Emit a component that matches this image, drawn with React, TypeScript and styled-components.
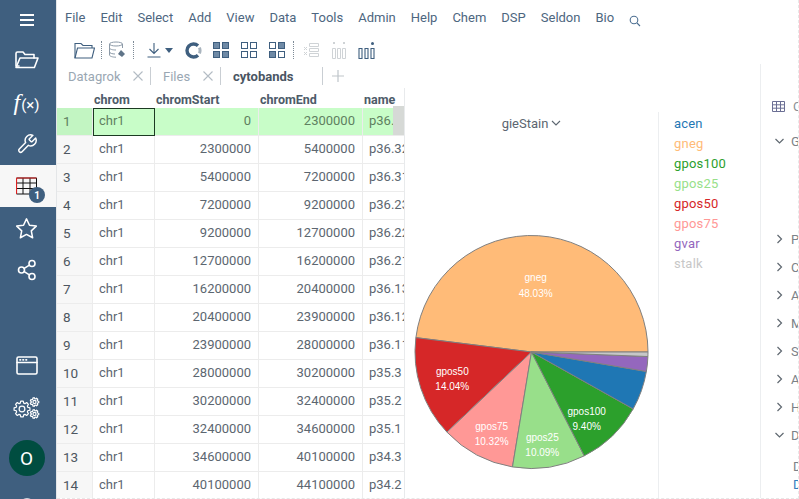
import React from "react";
import styled, { createGlobalStyle } from "styled-components";

const GlobalStyle = createGlobalStyle`
  html, body {
    margin: 0;
    padding: 0;
    height: 100%;
    overflow: hidden;
    background: #fff;
  }
  body {
    font-family: "Roboto", "Liberation Sans", sans-serif;
  }
`;

const navy = "#3f5f7f";

const Page = styled.div`
  display: flex;
  width: 799px;
  height: 499px;
  overflow: hidden;
`;

/* ---------- sidebar ---------- */

const Sidebar = styled.nav`
  flex: 0 0 56px;
  height: 499px;
  background: ${navy};
  display: flex;
  flex-direction: column;
  overflow: hidden;
  border-right: 1px solid #e4e6e8;
`;

const SideItem = styled.div<{ $active?: boolean; $h?: number }>`
  position: relative;
  flex: 0 0 ${(p) => p.$h ?? 42}px;
  box-sizing: border-box;
  padding-right: 3px;
  display: flex;
  align-items: center;
  justify-content: center;
  color: #fff;
  background: ${(p) => (p.$active ? "#f7f7f7" : "transparent")};
`;

const SideGap = styled.div`
  flex: 0 0 54px;
`;

const Badge = styled.span`
  position: absolute;
  left: 29px;
  top: 22px;
  width: 16px;
  height: 16px;
  border-radius: 50%;
  background: ${navy};
  color: #fff;
  font-size: 10px;
  font-weight: 700;
  display: flex;
  align-items: center;
  justify-content: center;
`;

const Avatar = styled.div`
  width: 36px;
  height: 36px;
  border-radius: 50%;
  background: #004d40;
  color: #fff;
  font-size: 19px;
  display: flex;
  align-items: center;
  justify-content: center;
`;

const stroke = {
  fill: "none",
  stroke: "currentColor",
  strokeWidth: 1.6,
  strokeLinecap: "round" as const,
  strokeLinejoin: "round" as const,
};

const gearOutline = (cx: number, cy: number, r: number, teeth: number) => {
  const pts: string[] = [];
  const inner = r * 0.76;
  const step = (Math.PI * 2) / teeth;
  for (let i = 0; i < teeth; i++) {
    const a = i * step;
    [
      [a - step * 0.36, inner],
      [a - step * 0.2, r],
      [a + step * 0.2, r],
      [a + step * 0.36, inner],
    ].forEach(([t, d]) => {
      pts.push(`${(cx + Math.cos(t) * d).toFixed(2)},${(cy + Math.sin(t) * d).toFixed(2)}`);
    });
  }
  return pts.join(" ");
};

const Gear = ({ cx, cy, r, teeth }: { cx: number; cy: number; r: number; teeth: number }) => (
  <g>
    <polygon points={gearOutline(cx, cy, r, teeth)} />
    <circle cx={cx} cy={cy} r={r * 0.36} />
  </g>
);

const FxLabel = styled.span`
  font-family: "Liberation Serif", serif;
  font-size: 24px;
  font-style: italic;
  color: #fff;
  span {
    font-family: "Roboto", sans-serif;
    font-style: normal;
    font-size: 15px;
    margin-left: 1px;
  }
`;

/* ---------- top bars ---------- */

const Main = styled.div`
  flex: 1;
  min-width: 0;
  box-sizing: border-box;
  display: flex;
  flex-direction: column;
  border-right: 1px dashed #e8e8e8;
  border-bottom: 1px dashed #e8e8e8;
`;

const MenuBar = styled.div`
  height: 36px;
  box-sizing: border-box;
  padding: 0 0 2px 8px;
  display: flex;
  align-items: center;
  gap: 15px;
  font-size: 13px;
  color: #4d6680;
`;

const SearchIcon = styled.svg`
  margin-top: 8px;
  flex: none;
`;

const Toolbar = styled.div`
  height: 28px;
  display: flex;
  align-items: center;
  padding-left: 17px;
`;

const Tool = styled.span<{ $w: number; $ml?: number }>`
  flex: 0 0 ${(p) => p.$w}px;
  margin-left: ${(p) => p.$ml ?? 0}px;
  display: flex;
  align-items: center;
  justify-content: center;
  color: ${navy};
`;

const ToolSep = styled.span<{ $ml: number }>`
  flex: 0 0 0;
  height: 18px;
  margin-left: ${(p) => p.$ml}px;
  border-left: 1px dotted #7d8a96;
`;

const Workspace = styled.div`
  flex: 1;
  min-height: 0;
  display: flex;
`;

const DocArea = styled.div`
  flex: 0 0 703px;
  display: flex;
  flex-direction: column;
  min-width: 0;
`;

const TabStrip = styled.div`
  height: 24px;
  display: flex;
  align-items: center;
  font-size: 13px;
  padding-left: 11px;
`;

const Tab = styled.span<{ $w: number; $current?: boolean }>`
  flex: 0 0 ${(p) => p.$w}px;
  display: flex;
  align-items: center;
  justify-content: space-between;
  padding-right: 7px;
  margin-right: 12px;
  height: 18px;
  box-sizing: border-box;
  color: ${(p) => (p.$current ? "#4a5563" : "#9aa7b3")};
  font-weight: ${(p) => (p.$current ? 700 : 400)};
  border-right: 1px solid #c9ced3;
`;

const AddTab = styled.svg`
  margin-left: -3px;
  flex: none;
`;

const Views = styled.div`
  flex: 1;
  min-height: 0;
  display: flex;
`;

/* ---------- grid ---------- */

const Table = styled.div`
  position: relative;
  flex: 0 0 347px;
  overflow: hidden;
  border-right: 1px solid #e8eaec;
  font-size: 13px;
  padding-top: 4px;
`;

const Row = styled.div`
  display: grid;
  grid-template-columns: 36px 62px 104px 104px 41px;
`;

const HeadCell = styled.div`
  height: 16px;
  line-height: 16px;
  padding-left: 1px;
  font-size: 12.5px;
  font-weight: 700;
  color: #4d5b69;
  white-space: nowrap;
  overflow: hidden;
`;

const Num = styled.div<{ $sel?: boolean }>`
  height: 28px;
  box-sizing: border-box;
  line-height: 26px;
  padding-left: 6px;
  font-size: 13.5px;
  color: ${(p) => (p.$sel ? "#5f8060" : "#4d5660")};
  background: ${(p) => (p.$sel ? "#c2f5c2" : "#f7f7f7")};
  border-bottom: 1px solid #ececec;
  border-right: 1px solid #ececec;
`;

const Cell = styled.div<{ $sel?: boolean; $right?: boolean; $current?: boolean; $last?: boolean }>`
  height: 28px;
  box-sizing: border-box;
  line-height: 26px;
  padding: 0 ${(p) => (p.$last ? 0 : 7)}px 0 6px;
  white-space: nowrap;
  overflow: hidden;
  text-align: ${(p) => (p.$right ? "right" : "left")};
  color: ${(p) => (p.$sel ? "#5f8060" : "#5c6670")};
  background: ${(p) => (p.$sel ? "#c8fdc8" : "#fff")};
  border-bottom: 1px solid #ececec;
  border-right: ${(p) => (p.$last ? "none" : "1px solid #ececec")};
  ${(p) => (p.$current ? "outline: 1px solid #1c3a22; outline-offset: -1px;" : "")}
`;

const ScrollThumb = styled.div`
  position: absolute;
  right: 0;
  top: 18px;
  width: 11px;
  height: 29px;
  background: #d6d9d6;
`;

/* ---------- pie viewer ---------- */

const PieViewer = styled.div`
  flex: 0 0 253px;
  display: flex;
  flex-direction: column;
  align-items: center;
`;

const ColumnPicker = styled.div`
  height: 16px;
  margin-top: 27px;
  display: flex;
  align-items: center;
  gap: 3px;
  font-size: 13px;
  color: #5c6670;
`;

const PieSvg = styled.svg`
  display: block;
  margin-top: 104px;
  flex: none;
`;

const Legend = styled.div`
  flex: 1;
  margin-top: 24px;
  padding: 2px 0 0 15px;
  border-left: 1px solid #eceef0;
  display: flex;
  flex-direction: column;
`;

const LegendItem = styled.div<{ $color: string }>`
  height: 20px;
  line-height: 20px;
  font-size: 13px;
  letter-spacing: 0.2px;
  color: ${(p) => p.$color};
`;

/* ---------- context panel ---------- */

const ContextPanel = styled.aside`
  flex: 1;
  min-width: 0;
  overflow: hidden;
  border-left: 1px solid #eceef0;
  padding: 34px 0 0 11px;
  font-size: 13px;
  color: #7b8288;
  white-space: nowrap;
  display: flex;
  flex-direction: column;
  svg {
    flex: none;
  }
`;

const PanelTitle = styled.div`
  display: flex;
  align-items: center;
  gap: 8px;
  height: 16px;
  color: #8a9096;
`;

const Pane = styled.div<{ $mt?: number }>`
  display: flex;
  align-items: center;
  gap: 7px;
  height: 16px;
  margin-top: ${(p) => p.$mt ?? 12}px;
  padding-left: 3px;
  color: #7b8288;
`;

const PaneText = styled.div`
  padding-left: 21px;
  height: 16px;
  line-height: 16px;
  margin-top: 16px;
`;

const PaneLink = styled(PaneText)`
  margin-top: 2px;
  color: #2f7fbf;
`;

/* ---------- data ---------- */

const menu = ["File", "Edit", "Select", "Add", "View", "Data", "Tools", "Admin", "Help", "Chem", "DSP", "Seldon", "Bio"];

const rows: [string, string, string][] = [
  ["0", "2300000", "p36.33"],
  ["2300000", "5400000", "p36.32"],
  ["5400000", "7200000", "p36.31"],
  ["7200000", "9200000", "p36.23"],
  ["9200000", "12700000", "p36.22"],
  ["12700000", "16200000", "p36.21"],
  ["16200000", "20400000", "p36.13"],
  ["20400000", "23900000", "p36.12"],
  ["23900000", "28000000", "p36.11"],
  ["28000000", "30200000", "p35.3"],
  ["30200000", "32400000", "p35.2"],
  ["32400000", "34600000", "p35.1"],
  ["34600000", "40100000", "p34.3"],
  ["40100000", "44100000", "p34.2"],
];

const legend = [
  { name: "acen", color: "#1f77b4" },
  { name: "gneg", color: "#ffbb78" },
  { name: "gpos100", color: "#2ca02c" },
  { name: "gpos25", color: "#98df8a" },
  { name: "gpos50", color: "#d62728" },
  { name: "gpos75", color: "#ff9896" },
  { name: "gvar", color: "#9467bd" },
  { name: "stalk", color: "#c7c7c7" },
];

// shares in drawing order, counter-clockwise from the east
const slices = [
  { color: "#ffbb78", share: 48.03, label: "gneg", x: 130.7, y: 46 },
  { color: "#d62728", share: 14.04, label: "gpos50", x: 47.3, y: 139.7 },
  { color: "#ff9896", share: 10.32, label: "gpos75", x: 86.7, y: 194.7 },
  { color: "#98df8a", share: 10.09, label: "gpos25", x: 137.3, y: 205.7 },
  { color: "#2ca02c", share: 9.4, label: "gpos100", x: 181.7, y: 179.7 },
  { color: "#1f77b4", share: 5.45 },
  { color: "#9467bd", share: 2.05 },
  { color: "#c7c7c7", share: 0.62 },
];

const R = 116.5;
const CX = 126.5;
const CY = 117;

const point = (pct: number) => {
  const t = (pct / 100) * Math.PI * 2;
  return [CX + R * Math.cos(t), CY - R * Math.sin(t)];
};

const Pie = () => {
  let acc = 0;
  return (
    <PieSvg width="253" height="236" viewBox="0 0 253 236">
      {slices.map((s) => {
        const [x1, y1] = point(acc);
        const [x2, y2] = point(acc + s.share);
        acc += s.share;
        return (
          <path
            key={s.color}
            d={`M${CX} ${CY}L${x1} ${y1}A${R} ${R} 0 0 0 ${x2} ${y2}Z`}
            fill={s.color}
            stroke="#808080"
            strokeWidth="1"
          />
        );
      })}
      {slices.map((s) =>
        s.label ? (
          <text
            key={s.label}
            x={s.x}
            y={s.y}
            textAnchor="middle"
            fill="#fff"
            fontFamily="Liberation Sans, sans-serif"
            fontSize="10"
          >
            <tspan x={s.x}>{s.label}</tspan>
            <tspan x={s.x} dy="15.7">
              {s.share.toFixed(2)}%
            </tspan>
          </text>
        ) : null
      )}
    </PieSvg>
  );
};

const Chevron = ({ open }: { open?: boolean }) => (
  <svg width="9" height="10" viewBox="0 0 9 10" fill="none" stroke="#5f6870" strokeWidth="1.2">
    {open ? <path d="M.5 3l4 4 4-4" /> : <path d="M2.500 1l4 4-4 4" />}
  </svg>
);

const Close = () => (
  <svg width="10" height="10" viewBox="0 0 10 10" stroke="#b3bcc4" strokeWidth="1.1">
    <path d="M.5.5l9 9M9.5.5l-9 9" />
  </svg>
);

const GridIcon = ({ fills }: { fills: boolean[] }) => (
  <svg width="16" height="16" viewBox="0 0 16 16">
    {[
      [0.5, 0.5],
      [9.5, 0.5],
      [0.5, 9.5],
      [9.5, 9.5],
    ].map(([x, y], i) => (
      <rect
        key={i}
        x={x}
        y={y}
        width="6"
        height="6"
        fill={fills[i] ? "#6f8aa6" : "none"}
        stroke={navy}
      />
    ))}
  </svg>
);

export default function App() {
  return (
    <>
      <GlobalStyle />
      <Page>
        <Sidebar>
          <SideItem $h={39}>
            <svg width="16" height="14" viewBox="0 0 16 14" stroke="#fff" strokeWidth="2">
              <path d="M1 2h14M1 7h14M1 12h14" />
            </svg>
          </SideItem>
          <SideItem>
            <svg width="24" height="18" viewBox="0 0 24 18" {...stroke}>
              <path d="M4 15L1 15V2.5C1 1.7 1.6 1 2.5 1H8l2 2.5h9V7" />
              <path d="M1 16.5L5 7h18l-3.6 9.5z" />
            </svg>
          </SideItem>
          <SideItem>
            <FxLabel>
              f<span>(×)</span>
            </FxLabel>
          </SideItem>
          <SideItem>
            <svg width="22" height="22" viewBox="0 0 24 24" {...stroke}>
              <path d="M14.7 6.3a1 1 0 0 0 0 1.4l1.6 1.6a1 1 0 0 0 1.4 0l3.77-3.77a6 6 0 0 1-7.94 7.94l-6.91 6.91a2.12 2.12 0 0 1-3-3l6.91-6.91a6 6 0 0 1 7.94-7.94l-3.76 3.76z" />
            </svg>
          </SideItem>
          <SideItem $active>
            <svg width="21" height="18" viewBox="0 0 21 18" fill="none" stroke="#111" strokeWidth="1">
              <path d="M.5 1h20v16H.5z" />
              <path d="M.5 6h20M.5 11.500h20M7 1v16M14 1v16" />
              <path d="M.5 1v16M.5 1h20" stroke="#d22" strokeWidth="1.2" />
            </svg>
            <Badge>1</Badge>
          </SideItem>
          <SideItem>
            <svg width="23" height="23" viewBox="0 0 24 24" {...stroke}>
              <path d="M12 2l3.1 6.6 7.1.9-5.200 5 1.400 7.200L12 18.200l-6.400 3.500L7 14.500l-5.200-5 7.100-.9z" />
            </svg>
          </SideItem>
          <SideItem>
            <svg width="20" height="22" viewBox="0 0 20 22" {...stroke}>
              <circle cx="15" cy="4.500" r="3" />
              <circle cx="4.500" cy="11" r="3" />
              <circle cx="15" cy="17.500" r="3" />
              <path d="M7.200 9.400l5.200-3.300M7.200 12.600l5.200 3.300" />
            </svg>
          </SideItem>
          <SideGap />
          <SideItem>
            <svg width="22" height="20" viewBox="0 0 22 20" {...stroke}>
              <rect x="1" y="1" width="20" height="17" rx="1.500" />
              <path d="M1 6.500h20" />
              <path d="M4 3.800h.5M7 3.800h.5M10 3.800h.5" strokeWidth="1.800" />
            </svg>
          </SideItem>
          <SideItem>
            <svg width="27" height="22" viewBox="0 0 27 22" {...stroke} strokeWidth={1.2}>
              <Gear cx={9} cy={12} r={8} teeth={8} />
              <Gear cx={21.500} cy={5} r={4.300} teeth={7} />
              <Gear cx={21.500} cy={17} r={4.300} teeth={7} />
            </svg>
          </SideItem>
          <SideItem $h={8} />
          <SideItem>
            <Avatar>O</Avatar>
          </SideItem>
          <SideItem $h={56}>
            <svg width="20" height="20" viewBox="0 0 20 20" {...stroke}>
              <circle cx="10" cy="10" r="8" />
            </svg>
          </SideItem>
        </Sidebar>

        <Main>
          <MenuBar>
            {menu.map((m) => (
              <span key={m}>{m}</span>
            ))}
            <SearchIcon width="12" height="12" viewBox="0 0 12 12" fill="none" stroke="#4d6f92" strokeWidth="1.100">
              <circle cx="5" cy="5" r="3.800" />
              <path d="M8 8l3 3" />
            </SearchIcon>
          </MenuBar>

          <Toolbar>
            <Tool $w={21}>
              <svg width="21" height="17" viewBox="0 0 21 17" fill="none" stroke={navy} strokeWidth="1.100">
                <path d="M1 16V1.500h6l2 2h9V6" />
                <path d="M1 16L3.500 6H20.500l-2.500 10z" />
              </svg>
            </Tool>
            <ToolSep $ml={6} />
            <Tool $w={18} $ml={6}>
              <svg width="18" height="18" viewBox="0 0 18 18" fill="none" stroke="#8c9aa8" strokeWidth="1">
                <ellipse cx="8" cy="3" rx="6.500" ry="2" />
                <path d="M1.500 3v11c0 1.200 3 2.200 6.500 2.200M14.500 3v4M1.500 7c0 1.200 3 2 6.500 2M1.500 11c0 1.200 3 2 5.500 2" />
                <path d="M10 13l3-4 4 4-3 3z" fill="#5f7488" stroke="none" />
              </svg>
            </Tool>
            <ToolSep $ml={7} />
            <Tool $w={14} $ml={13}>
              <svg width="14" height="16" viewBox="0 0 14 16" fill="none" stroke={navy} strokeWidth="1.100">
                <path d="M7 1v10M2.500 7L7 11.500 11.500 7M.5 15h13" />
              </svg>
            </Tool>
            <Tool $w={8} $ml={4}>
              <svg width="8" height="5" viewBox="0 0 8 5">
                <path d="M0 0h8L4 5z" fill={navy} />
              </svg>
            </Tool>
            <Tool $w={18} $ml={11}>
              <svg width="17" height="17" viewBox="0 0 17 17" fill="none">
                <path d="M14.400 5.700A6.500 6.500 0 0 1 14.400 11.300" stroke="#a9b4be" strokeWidth="3" />
                <path d="M13 3.800A6.500 6.500 0 1 0 13 13.200" stroke="#3f5f7f" strokeWidth="3.400" />
              </svg>
            </Tool>
            <Tool $w={16} $ml={11}>
              <GridIcon fills={[true, true, true, true]} />
            </Tool>
            <Tool $w={16} $ml={12}>
              <GridIcon fills={[false, false, false, false]} />
            </Tool>
            <Tool $w={16} $ml={12}>
              <GridIcon fills={[false, true, true, false]} />
            </Tool>
            <ToolSep $ml={8} />
            <Tool $w={16} $ml={9}>
              <svg width="16" height="16" viewBox="0 0 16 16" fill="none" stroke="#cfd3d6">
                <path d="M6.500 1.500h9v3h-9zM6.500 6.500h9v3h-9zM6.500 11.500h9v3h-9z" />
                <path d="M1 5l3 3M4 5L1 8M1 10l3 3M4 10l-3 3" />
              </svg>
            </Tool>
            <Tool $w={16} $ml={12}>
              <svg width="16" height="18" viewBox="0 0 16 18" fill="none" stroke="#cfd3d6">
                <path d="M1.500 7.500h3v10h-3zM6.500 7.500h3v10h-3zM11.500 7.500h3v10h-3z" />
                <path d="M2 1l2 2M4 1L2 3M12 1l2 2M14 1l-2 2" />
              </svg>
            </Tool>
            <Tool $w={17} $ml={11}>
              <svg width="17" height="18" viewBox="0 0 17 18" fill="none" stroke={navy} strokeWidth="1.100">
                <path d="M1 7.500h3v10H1zM7 7.500h3v10H7zM13 7.500h3v10h-3z" />
                <circle cx="14.500" cy="2.500" r="1.500" fill="#3f5f7f" stroke="none" />
              </svg>
            </Tool>
          </Toolbar>

          <Workspace>
            <DocArea>
              <TabStrip>
                <Tab $w={83}>
                  Datagrok
                  <Close />
                </Tab>
                <Tab $w={58}>
                  Files
                  <Close />
                </Tab>
                <Tab $w={90} $current>
                  cytobands
                </Tab>
                <AddTab width="12" height="12" viewBox="0 0 12 12" stroke="#bfc5ca" strokeWidth="1.200">
                  <path d="M6 0v12M0 6h12" />
                </AddTab>
              </TabStrip>
              <Views>
                <Table>
                  <Row>
                    <HeadCell />
                    <HeadCell>chrom</HeadCell>
                    <HeadCell>chromStart</HeadCell>
                    <HeadCell>chromEnd</HeadCell>
                    <HeadCell>name</HeadCell>
                  </Row>
                  {rows.map(([start, end, name], i) => {
                    const sel = i === 0;
                    return (
                      <Row key={name}>
                        <Num $sel={sel}>{i + 1}</Num>
                        <Cell $sel={sel} $current={sel}>
                          chr1
                        </Cell>
                        <Cell $sel={sel} $right>
                          {start}
                        </Cell>
                        <Cell $sel={sel} $right>
                          {end}
                        </Cell>
                        <Cell $sel={sel} $last>
                          {name}
                        </Cell>
                      </Row>
                    );
                  })}
                  <ScrollThumb />
                </Table>
                <PieViewer>
                  <ColumnPicker>
                    gieStain
                    <svg width="10" height="8" viewBox="0 0 10 8" fill="none" stroke="#5c6670" strokeWidth="1.100">
                      <path d="M1 2l4 4 4-4" />
                    </svg>
                  </ColumnPicker>
                  <Pie />
                </PieViewer>
                <Legend>
                  {legend.map((l) => (
                    <LegendItem key={l.name} $color={l.color}>
                      {l.name}
                    </LegendItem>
                  ))}
                </Legend>
              </Views>
            </DocArea>
            <ContextPanel>
              <PanelTitle>
                <svg width="13" height="11" viewBox="0 0 13 11" fill="none" stroke="#6b6f94" strokeWidth="1">
                  <path d="M.5.500h12v10H.5zM.5 3.800h12M.5 7.200h12M4.500.500v10M8.500.500v10" />
                </svg>
                Cytobands
              </PanelTitle>
              <Pane $mt={19}>
                <Chevron open />
                General
              </Pane>
              <Pane $mt={82}>
                <Chevron />
                Properties
              </Pane>
              <Pane>
                <Chevron />
                Colors
              </Pane>
              <Pane>
                <Chevron />
                Actions
              </Pane>
              <Pane>
                <Chevron />
                Model
              </Pane>
              <Pane>
                <Chevron />
                Sharing
              </Pane>
              <Pane>
                <Chevron />
                Activity
              </Pane>
              <Pane>
                <Chevron />
                History
              </Pane>
              <Pane>
                <Chevron open />
                Dev
              </Pane>
              <PaneText>Data</PaneText>
              <PaneLink>Docs</PaneLink>
            </ContextPanel>
          </Workspace>
        </Main>
      </Page>
    </>
  );
}
